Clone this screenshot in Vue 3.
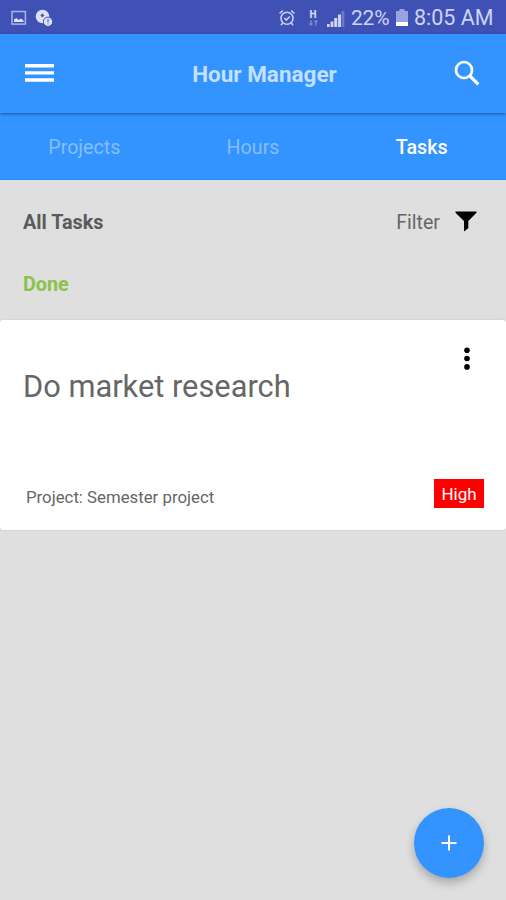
<script setup>
import { ref } from "vue";

const tabs = ["Projects", "Hours", "Tasks"];
const activeTab = ref("Tasks");

const tasks = ref([
  { id: 1, title: "Do market research", project: "Semester project", priority: "High" },
]);
</script>

<template>
  <div class="app">
    <div class="status-bar">
      <div class="status-left">
        <svg width="16" height="16" viewBox="0 0 16 16">
          <rect x="1" y="1.5" width="13.4" height="12.6" fill="none" stroke="#aab4e6" stroke-width="1.5" />
          <path d="M3 12V9.5L5.5 8l2 2L10 8.5l2.5 2V12z" fill="#dfe4fa" />
        </svg>
        <svg class="sync-icon" width="18" height="18" viewBox="0 0 18 18">
          <circle cx="7.5" cy="7.5" r="6.8" fill="#dce1f8" />
          <path d="M7.2 4.2l2.3 2.4-2.3 1.8-1.8-1.8z" fill="#4a58b8" />
          <circle cx="13" cy="12.8" r="4.7" fill="#dce1f8" stroke="#3f51b5" stroke-width="1" />
          <path d="M13 10v3.2M13 14.4v1.2" stroke="#5967bf" stroke-width="1.3" />
        </svg>
      </div>

      <div class="status-right">
        <svg width="18" height="18" viewBox="0 0 18 18" fill="none" stroke="#c9d0f2" stroke-width="1.6">
          <circle cx="9" cy="9.3" r="6" />
          <path d="M1.5 4.5L4.8 1.7M16.5 4.5l-3.3-2.8M4.8 13.8l-1.8 2.5M13.2 13.8l1.8 2.5M6.3 9l2 2 3.5-3.5" />
        </svg>
        <div class="network">
          <span>H</span>
          <svg width="9" height="6" viewBox="0 0 9 6" fill="none" stroke="#7b88d2" stroke-width="1.4">
            <path d="M2 0v5M.5 3.5L2 5l1.5-1.5M7 5.5V.7M5.5 2L7 .7 8.5 2" />
          </svg>
        </div>
        <svg class="signal" width="18" height="17" viewBox="0 0 18 17">
          <path d="M0 14h2.6v3H0zM3.6 11.5h2.8V17H3.6zM7.2 8h3v9h-3zM11 4.5h3V17h-3z" fill="#cdd4f5" />
          <path d="M14.6 1h2.8v16h-2.8z" fill="#6c79ca" />
        </svg>
        <span class="battery-text">22%</span>
        <svg class="battery" width="12" height="18" viewBox="0 0 12 18">
          <path d="M3.5 0h5v2H12v13H0V2h3.5z" fill="#98a3df" />
          <path d="M0 13h12v4H0z" fill="#fff" />
        </svg>
        <span class="clock">8:05 AM</span>
      </div>
    </div>

    <header class="toolbar">
      <svg width="30" height="20" viewBox="0 0 30 20">
        <path d="M0 1h29v3.4H0zM0 8.2h29v3.4H0zM0 15.3h29v3.4H0z" fill="#fff" />
      </svg>
      <h1>Hour Manager</h1>
      <svg width="26" height="26" viewBox="0 0 26 26" fill="none" stroke="#fff">
        <circle cx="10" cy="10" r="8" stroke-width="2.7" />
        <path d="M16 16l8.3 8.3" stroke-width="3.2" />
      </svg>
    </header>

    <nav class="tabs">
      <button
        v-for="tab in tabs"
        :key="tab"
        :class="{ active: tab === activeTab }"
        @click="activeTab = tab"
      >
        {{ tab }}
      </button>
    </nav>

    <main>
      <div class="list-header">
        <h2>All Tasks</h2>
        <div class="filter">
          <span>Filter</span>
          <svg width="22" height="21" viewBox="0 0 22 21">
            <path d="M.5.5h21v1.2L13.3 10v7.2L9 20.5V10L.5 1.7z" fill="#000" />
          </svg>
        </div>
      </div>

      <h3 class="group-title">Done</h3>

      <div v-for="task in tasks" :key="task.id" class="card">
        <svg class="more" width="6" height="24" viewBox="0 0 6 24">
          <circle cx="3" cy="3.2" r="2.8" />
          <circle cx="3" cy="11.5" r="2.8" />
          <circle cx="3" cy="19.9" r="2.8" />
        </svg>
        <p class="task-title">{{ task.title }}</p>
        <div class="card-footer">
          <span class="project">Project: {{ task.project }}</span>
          <span class="priority">{{ task.priority }}</span>
        </div>
      </div>
    </main>

    <button class="fab">
      <svg width="16" height="16" viewBox="0 0 16 16">
        <path d="M8 .5v15M.5 8h15" stroke="#fff" stroke-width="2" />
      </svg>
    </button>
  </div>
</template>

<style>
body {
  margin: 0;
}
</style>

<style scoped>
* {
  margin: 0;
  padding: 0;
  box-sizing: border-box;
}

.app {
  position: relative;
  height: 900px;
  overflow: hidden;
  font-family: Roboto, sans-serif;
  background: #dfdfdf;
}

svg {
  display: block;
  flex-shrink: 0;
}

.status-bar {
  display: flex;
  justify-content: space-between;
  height: 34px;
  padding: 0 11px;
  background: #3f51b5;
  color: #cdd4f5;
}

.status-left,
.status-right {
  display: flex;
  align-items: center;
  padding-top: 2px;
}

.sync-icon {
  margin-left: 8px;
}

.network {
  display: flex;
  flex-direction: column;
  align-items: center;
  width: 10px;
  margin: -2px 0 0 12px;
  font-size: 10px;
  font-weight: 900;
  line-height: 11px;
}

.signal {
  margin-left: 9px;
}

.battery-text {
  width: 41px;
  margin-left: 6px;
  font-size: 21px;
  line-height: 34px;
  letter-spacing: -0.2px;
  white-space: nowrap;
}

.battery {
  margin-left: 4px;
}

.clock {
  width: 81px;
  margin-left: 6px;
  font-size: 21.5px;
  line-height: 34px;
  white-space: nowrap;
}

.toolbar {
  position: relative;
  display: flex;
  align-items: center;
  justify-content: space-between;
  height: 79px;
  padding: 0 26px 2px 25px;
  background: #3393ff;
  box-shadow: 0 1px 3px rgba(0, 0, 0, 0.4);
}

.toolbar h1 {
  padding: 2px 0 0 20px;
  font-size: 22.5px;
  font-weight: 700;
  color: #c4e0ff;
}

.tabs {
  display: grid;
  grid-template-columns: repeat(3, 1fr);
  height: 67px;
  background: #3393ff;
  border-bottom: 1px solid #1e8cf0;
}

.tabs button {
  padding-top: 3px;
  border: none;
  background: none;
  font-family: inherit;
  font-size: 19.7px;
  color: #85bfff;
  cursor: pointer;
}

.tabs button.active {
  font-weight: 500;
  color: #fff;
}

.list-header {
  display: flex;
  align-items: center;
  justify-content: space-between;
  height: 84px;
  padding: 0 29px 0 23px;
}

.list-header h2 {
  font-size: 19.8px;
  font-weight: 700;
  color: #5a5a5a;
}

.filter {
  display: flex;
  align-items: center;
  gap: 15px;
  font-size: 19.6px;
  color: #666;
}

.filter span {
  padding-top: 1px;
}

.filter svg {
  margin-bottom: 2px;
}

.group-title {
  height: 56px;
  padding-left: 23px;
  font-size: 19.8px;
  font-weight: 700;
  line-height: 41px;
  color: #8bc34a;
}

.card {
  display: flex;
  flex-direction: column;
  height: 210px;
  padding: 27px 22px 22px 23px;
  background: #fff;
  border-radius: 3px;
  box-shadow: 0 0 2px rgba(0, 0, 0, 0.15);
}

.more {
  align-self: flex-end;
  margin-right: 14px;
}

.task-title {
  margin-top: -3px;
  font-size: 30.8px;
  line-height: 38px;
  color: #666;
}

.card-footer {
  display: flex;
  align-items: center;
  justify-content: space-between;
  margin-top: auto;
  padding-left: 3px;
}

.project {
  padding-top: 7px;
  font-size: 16.8px;
  color: #666;
}

.priority {
  width: 50px;
  height: 29px;
  background: #f00;
  color: #fff;
  font-size: 17px;
  line-height: 31px;
  text-align: center;
}

.fab {
  position: absolute;
  right: 22px;
  bottom: 22px;
  display: flex;
  align-items: center;
  justify-content: center;
  width: 70px;
  height: 70px;
  border: none;
  border-radius: 50%;
  background: #3393ff;
  box-shadow: 0 5px 10px rgba(0, 0, 0, 0.25);
  cursor: pointer;
}
</style>
